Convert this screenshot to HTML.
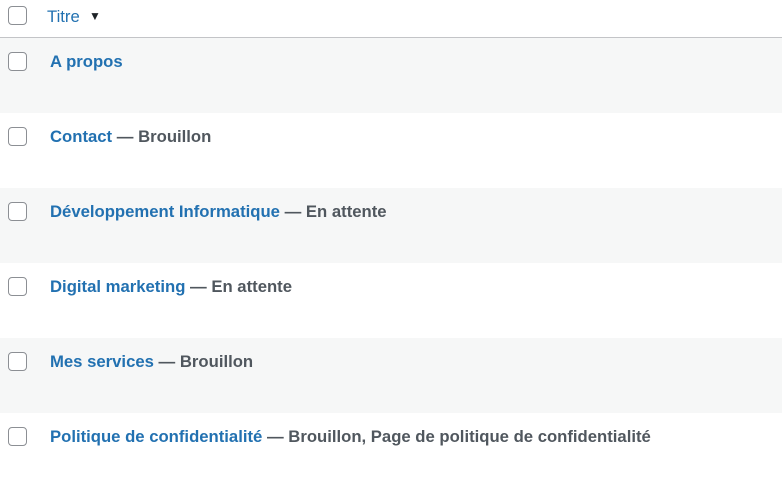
<!DOCTYPE html>
<html><head><meta charset="utf-8"><style>
body{margin:0;width:782px;height:472px;overflow:hidden;background:#fff;font-family:"Liberation Sans",sans-serif;font-size:16.7px}
.hd{height:37px;border-bottom:1px solid #c3c4c7;position:relative}
.cb{position:absolute;left:8px;width:19px;height:19px;border:1px solid #8c8f94;border-radius:4px;background:#fff;box-sizing:border-box}
.row{height:75px;position:relative}
.alt{background:#f6f7f7}
.t{position:absolute;left:50px;top:14px;color:#50575e;font-weight:600;white-space:nowrap}
.t a{color:#2271b1;text-decoration:none}
.h{position:absolute;left:47px;top:7px;color:#2271b1}
</style></head><body>
<div class="hd"><div class="cb" style="top:6px"></div><div class="h">Titre&nbsp; <span style="color:#1d2327;font-size:12px;position:relative;top:-2px">▼</span></div></div>
<div class="row alt"><div class="cb" style="top:14px"></div><div class="t"><a>A propos</a></div></div>
<div class="row"><div class="cb" style="top:14px"></div><div class="t"><a>Contact</a> — Brouillon</div></div>
<div class="row alt"><div class="cb" style="top:14px"></div><div class="t"><a>Développement Informatique</a> — En attente</div></div>
<div class="row"><div class="cb" style="top:14px"></div><div class="t"><a>Digital marketing</a> — En attente</div></div>
<div class="row alt"><div class="cb" style="top:14px"></div><div class="t"><a>Mes services</a> — Brouillon</div></div>
<div class="row"><div class="cb" style="top:14px"></div><div class="t"><a>Politique de confidentialité</a> — Brouillon, Page de politique de confidentialité</div></div>
</body></html>
